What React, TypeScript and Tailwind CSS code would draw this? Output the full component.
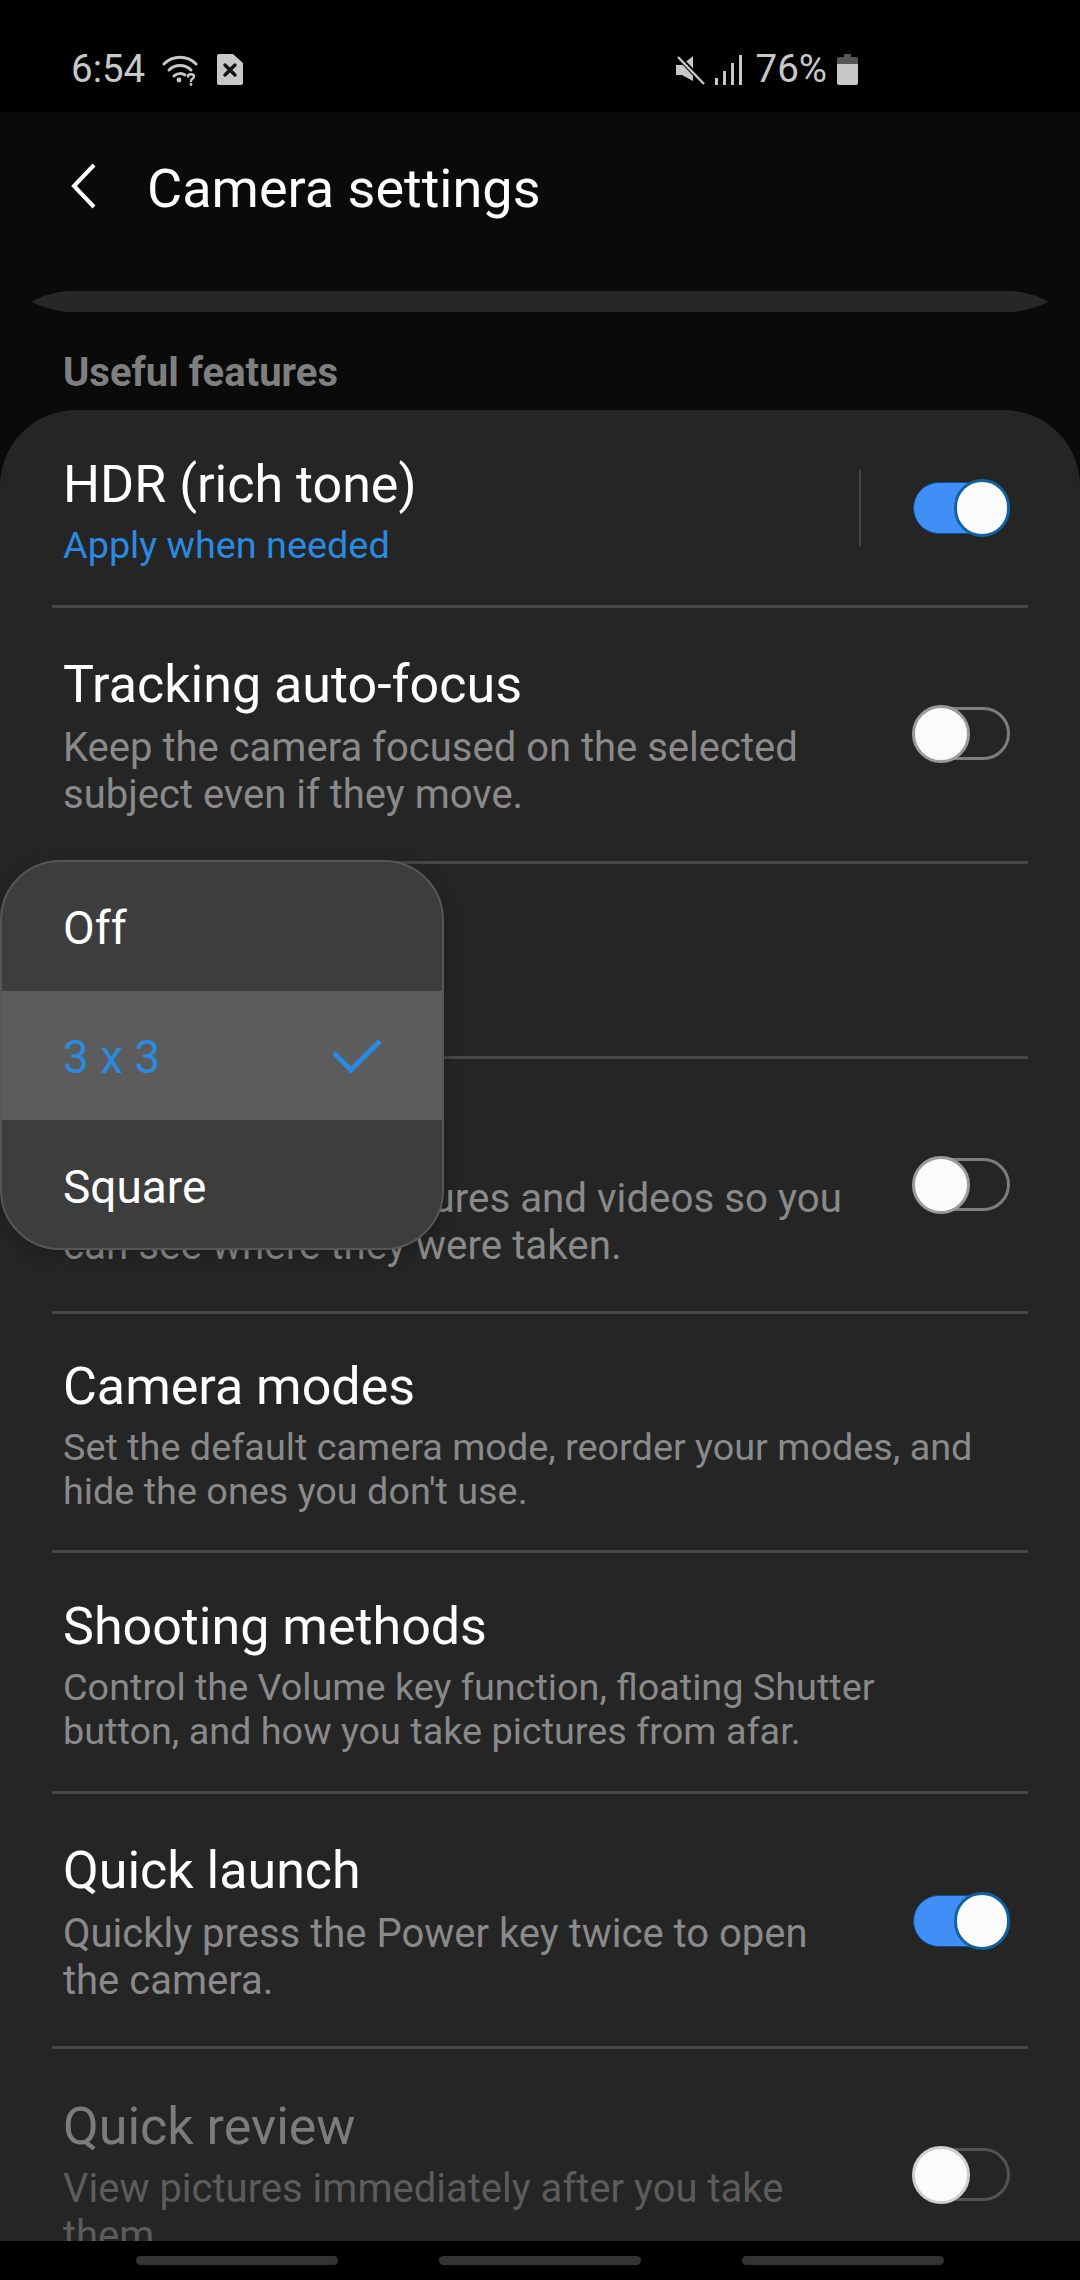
import React from 'react';

const font = { fontFamily: 'Roboto, sans-serif' };

const WifiIcon = () => (
  <svg width="36" height="32" viewBox="0 0 36 32" fill="none" stroke="#c8c8c8" strokeLinecap="round" className="ml-[17px]">
    <path d="M2 10C11 1 25 1 34 10" strokeWidth="3" />
    <path d="M7 16C13 10 23 10 29 16" strokeWidth="3" />
    <path d="M12 22C15 19 20 19 23 21" strokeWidth="3" />
    <circle cx="17" cy="26" r="2.4" fill="#c8c8c8" stroke="none" />
    <path d="M26 22.5C26 19.5 32 19.5 32 22.5C32 25 29 24.5 29 27" strokeWidth="2.4" />
    <circle cx="29" cy="30.5" r="1.4" fill="#c8c8c8" stroke="none" />
  </svg>
);

const SimIcon = () => (
  <svg width="26" height="31" viewBox="0 0 26 31" className="ml-[19px]">
    <path d="M2 0H16L26 9V29A2 2 0 0 1 24 31H2A2 2 0 0 1 0 29V2A2 2 0 0 1 2 0Z" fill="#c8c8c8" />
    <path d="M8 11L18 21M18 11L8 21" stroke="#111" strokeWidth="3.4" strokeLinecap="round" />
  </svg>
);

const MuteIcon = () => (
  <svg width="29" height="30" viewBox="0 0 29 30">
    <path d="M0 10H6L17 1V26L6 20H0Z" fill="#c8c8c8" />
    <path d="M2 1L28 29" stroke="#000" strokeWidth="5" />
    <path d="M2 2L28 29" stroke="#c8c8c8" strokeWidth="2.4" />
  </svg>
);

const SignalIcon = () => (
  <svg width="27" height="30" viewBox="0 0 27 30" fill="#c8c8c8" className="ml-[10px]">
    <rect x="0" y="23" width="3" height="7" />
    <rect x="8" y="16" width="3" height="14" />
    <rect x="16" y="8" width="3" height="22" />
    <rect x="24" y="0" width="3" height="30" />
  </svg>
);

const BatteryIcon = () => (
  <svg width="21" height="31" viewBox="0 0 21 31" className="ml-[10px]">
    <path d="M7 0H14V3H19A2 2 0 0 1 21 5V10H0V5A2 2 0 0 1 2 3H7Z" fill="#555" />
    <path d="M0 10H21V29A2 2 0 0 1 19 31H2A2 2 0 0 1 0 29Z" fill="#c8c8c8" />
  </svg>
);

const Toggle = ({ on, dim }: { on: boolean; dim?: boolean }) =>
  on ? (
    <div className="relative w-[97px] h-[52px] rounded-full bg-[#3f8ff6] border border-[#0f4f8f] shrink-0">
      <div className="absolute right-[-1px] top-[-4px] w-[56px] h-[58px] rounded-full bg-[#fbfbfb] border-[3px] border-[#11629f]" />
    </div>
  ) : (
    <div className={`relative w-[97px] h-[53px] rounded-full border-[3px] shrink-0 ${dim ? 'border-[#525252]' : 'border-[#7d7d7d]'}`}>
      <div className={`absolute left-[-4px] top-[-5px] w-[58px] h-[58px] rounded-full bg-[#fbfbfb] border-[3px] ${dim ? 'border-[#cfcfcf]' : 'border-[#9b9b9b]'}`} />
    </div>
  );

function App() {
  return (
    <div style={font} className="w-[1080px] h-[2280px] bg-[#0a0a0a] flex flex-col overflow-hidden">
      {/* status bar */}
      <div className="h-[112px] bg-black flex items-center justify-between pl-[71px] pr-[222px] pt-[27px] shrink-0 text-[38.5px] text-[#c8c8c8]">
        <div className="flex items-center">
          <span className="leading-none">6:54</span>
          <WifiIcon />
          <SimIcon />
        </div>
        <div className="flex items-center">
          <MuteIcon />
          <SignalIcon />
          <span className="leading-none ml-[14px]">76%</span>
          <BatteryIcon />
        </div>
      </div>

      {/* title */}
      <div className="h-[179px] shrink-0 flex items-start pl-[70px] pt-[50px]">
        <svg width="28" height="46" viewBox="0 0 28 46" fill="none" stroke="#fff" strokeWidth="4" className="mt-[1px]">
          <path d="M24 2L4 23L24 44" />
        </svg>
        <span className="ml-[49px] mt-[-3px] text-[54px] leading-[60px] text-white">Camera settings</span>
      </div>

      <div className="mx-[31px] h-[21px] shrink-0 bg-[#272727] [clip-path:polygon(0_50%,12px_25%,24px_8%,36px_0,calc(100%-36px)_0,calc(100%-24px)_8%,calc(100%-12px)_25%,100%_50%,calc(100%-12px)_75%,calc(100%-24px)_92%,calc(100%-36px)_100%,36px_100%,24px_92%,12px_75%)]" />

      <div className="h-[98px] shrink-0 pl-[63px] pt-[36px] text-[40px] leading-[50px] font-bold text-[#7f7f7f]">Useful features</div>

      {/* settings card */}
      <div className="relative flex-1 bg-[#252525] rounded-t-[76px] overflow-hidden">
        <div className="h-[198px] mx-[52px] pl-[11px] pr-[18px] border-b-[3px] border-[#474747] flex items-start justify-between">
          <div className="pt-[45px]">
            <div className="text-[52px] leading-[60px] text-white">HDR (rich tone)</div>
            <div className="mt-[7px] text-[37.8px] leading-[47px] text-[#2a8ae0]">Apply when needed</div>
          </div>
          <div className="flex items-center mt-[60px]">
            <div className="w-[2px] h-[76px] bg-[#464646] mr-[52px]" />
            <Toggle on />
          </div>
        </div>

        <div className="h-[256px] mx-[52px] pl-[11px] pr-[18px] border-b-[3px] border-[#474747] flex items-center justify-between">
          <div className="self-start pt-[47px]">
            <div className="text-[52px] leading-[60px] text-white">Tracking auto-focus</div>
            <div className="mt-[9px] text-[40px] leading-[47px] text-[#8a8a8a]">Keep the camera focused on the selected<br />subject even if they move.</div>
          </div>
          <div className="mb-[2px]"><Toggle on={false} /></div>
        </div>

        <div className="h-[195px] mx-[52px] pl-[11px] pr-[18px] border-b-[3px] border-[#474747]">
          <div className="pt-[45px]">
            <div className="text-[52px] leading-[60px] text-white">Grid lines</div>
            <div className="mt-[6px] text-[38px] leading-[47px] text-[#2a8ae0]">3 x 3</div>
          </div>
        </div>

        <div className="h-[255px] mx-[52px] pl-[11px] pr-[18px] border-b-[3px] border-[#474747] flex items-center justify-between">
          <div className="self-start pt-[47px]">
            <div className="text-[52px] leading-[60px] text-white">Location tags</div>
            <div className="mt-[9px] text-[40.3px] leading-[47px] text-[#8a8a8a]">Add GPS tags to pictures and videos so you<br />can see where they were taken.</div>
          </div>
          <div className="mb-[1px]"><Toggle on={false} /></div>
        </div>

        <div className="h-[239px] mx-[52px] pl-[11px] pr-[18px] border-b-[3px] border-[#474747]">
          <div className="pt-[43px]">
            <div className="text-[52px] leading-[60px] text-white">Camera modes</div>
            <div className="mt-[8px] text-[37.8px] leading-[44px] text-[#8a8a8a]">Set the default camera mode, reorder your modes, and<br />hide the ones you don't use.</div>
          </div>
        </div>

        <div className="h-[241px] mx-[52px] pl-[11px] pr-[18px] border-b-[3px] border-[#474747]">
          <div className="pt-[44px]">
            <div className="text-[52px] leading-[60px] text-white">Shooting methods</div>
            <div className="mt-[8px] text-[37.8px] leading-[44px] text-[#8a8a8a]">Control the Volume key function, floating Shutter<br />button, and how you take pictures from afar.</div>
          </div>
        </div>

        <div className="h-[255px] mx-[52px] pl-[11px] pr-[18px] border-b-[3px] border-[#474747] flex items-center justify-between">
          <div className="self-start pt-[47px]">
            <div className="text-[52px] leading-[60px] text-white">Quick launch</div>
            <div className="mt-[9px] text-[40px] leading-[47px] text-[#8a8a8a]">Quickly press the Power key twice to open<br />the camera.</div>
          </div>
          <div className="mb-[-2px]"><Toggle on /></div>
        </div>

        <div className="h-[255px] mx-[52px] pl-[11px] pr-[18px] flex items-start justify-between">
          <div className="pt-[48px]">
            <div className="text-[52px] leading-[60px] text-[#7c7c7c]">Quick review</div>
            <div className="mt-[8px] text-[40px] leading-[47px] text-[#5c5c5c]">View pictures immediately after you take<br />them.</div>
          </div>
          <div className="mt-[99px]"><Toggle on={false} dim /></div>
        </div>

        {/* dropdown over the grid lines row */}
        <div className="absolute left-0 top-[450px] w-[444px] h-[390px] rounded-[60px] bg-[#3d3d3d] border-[2px] border-[#565656] overflow-hidden shadow-[0_4px_16px_rgba(0,0,0,0.25)]">
          <div className="h-[129px] pl-[61px] pt-[36px] text-[46px] leading-[60px] text-white">Off</div>
          <div className="h-[129px] pl-[61px] pr-[60px] bg-[#5c5c5c] flex items-center justify-between text-[46px] leading-[60px] text-[#2a8ae0]">
            <span className="mt-[2px]">3 x 3</span>
            <svg width="50" height="34" viewBox="0 0 50 34" fill="none" stroke="#2a8ae0" strokeWidth="5">
              <path d="M2 14L19 31L48 2" />
            </svg>
          </div>
          <div className="h-[129px] pl-[61px] pt-[37px] text-[46px] leading-[60px] text-white">Square</div>
        </div>
      </div>

      {/* nav bar */}
      <div className="h-[39px] bg-black shrink-0 flex justify-center gap-[101px] pt-[15px] relative z-10">
        <div className="w-[202px] h-[9px] rounded-full bg-[#333333]" />
        <div className="w-[202px] h-[9px] rounded-full bg-[#333333]" />
        <div className="w-[202px] h-[9px] rounded-full bg-[#333333]" />
      </div>
    </div>
  );
}

export default App;
